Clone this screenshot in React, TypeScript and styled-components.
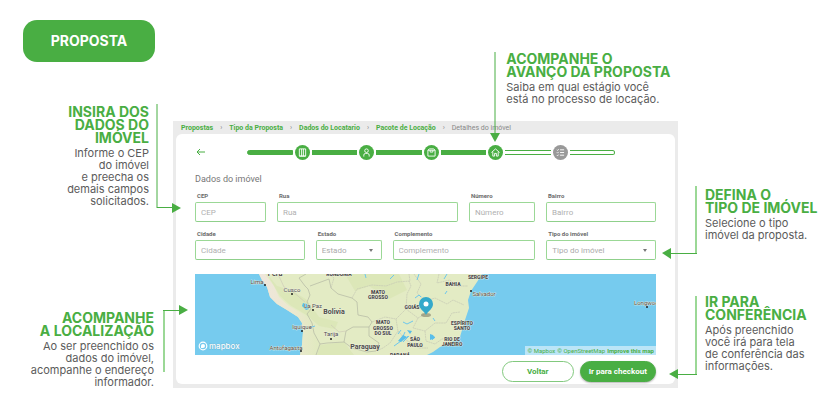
import React from "react";
import styled, { createGlobalStyle, css } from "styled-components";

const green = "#49ae43";
const soft = "#9bd896";

const GlobalStyle = createGlobalStyle`
  * { box-sizing: border-box; }
  body { margin: 0; background: #fff; font-family: Roboto, sans-serif; }
  button, input, select { font-family: inherit; }
`;

const Page = styled.main`
  display: grid;
  grid-template-columns: minmax(0, 173fr) minmax(0, 505fr) minmax(0, 162fr);
  padding-bottom: 32px;
`;
const LeftColumn = styled.div`
  display: flex;
  flex-direction: column;
  gap: 104px;
  padding-top: 20px;
`;
const Intro = styled.div`
  display: flex;
  flex-direction: column;
  gap: 43px;
`;
const CenterColumn = styled.div`
  display: flex;
  flex-direction: column;
  gap: 16px;
  padding-top: 52px;
`;
const RightColumn = styled.div`
  display: flex;
  flex-direction: column;
  gap: 54px;
  padding-top: 188px;
`;
const Badge = styled.h1`
  display: flex;
  align-items: center;
  justify-content: center;
  width: 132px;
  height: 42px;
  margin: 0 0 0 23px;
  border-radius: 14px;
  background: ${green};
  color: #fff;
  font: 700 14px/16px Inter, sans-serif;
`;

type Side = "left" | "top" | "right";
const NoteBox = styled.section<{ $side: Side; $inset: number }>`
  position: relative;
  z-index: 1;
  white-space: pre;
  ${({ $side, $inset }) =>
    $side === "left"
      ? css`text-align: right; padding-right: ${$inset}px;`
      : $side === "right"
      ? css`padding-left: ${$inset}px;`
      : css`margin-left: ${$inset}%;`}
`;
const NoteTitle = styled.h2`
  margin: 0 0 3px;
  color: ${green};
  font: 700 14px/13px Inter, sans-serif;
`;
const NoteText = styled.p`
  margin: 0;
  color: #5b5b5b;
  font: 400 11px/12px Inter, sans-serif;
`;
const Connector = styled.svg<{ $side: Side; $edge: number; $top: number }>`
  position: absolute;
  top: ${({ $top }) => $top}px;
  ${({ $side, $edge }) => ($side === "left" ? `right: ${$edge}px;` : `left: ${$edge}px;`)}
  fill: none;
  pointer-events: none;
`;

const Panel = styled.div`
  display: flex;
  flex-direction: column;
  padding: 0 3px 4px;
  background: #ebebeb;
`;
const Crumbs = styled.nav`
  display: flex;
  align-items: center;
  gap: 7px;
  height: 13px;
  padding-left: 5px;
  color: #888;
  font-size: 7px;
  line-height: 8px;
  white-space: nowrap;
`;
const Crumb = styled.a`
  color: ${green};
  font-weight: 700;
  text-decoration: none;
`;
const Card = styled.div`
  padding: 10px 19px 2px;
  border-radius: 6px;
  background: #fff;
`;
const StepRow = styled.div`
  display: grid;
  grid-template-columns: 52fr 368fr 41fr;
  align-items: center;
  height: 16px;
`;
const BackButton = styled.button`
  justify-self: start;
  display: flex;
  padding: 0;
  border: 0;
  background: none;
  color: ${green};
`;
const Steps = styled.div`
  display: flex;
  align-items: center;
  gap: 2px;
`;
const Segment = styled.span<{ $done: boolean; $end?: "start" | "end" }>`
  flex: 1 1 2px;
  height: 5px;
  background: ${({ $done }) => ($done ? green : "#fff")};
  border: 1px solid ${green};
  ${({ $done }) => !$done && "border-left-width: 0; border-right-width: 0;"}
  ${({ $end }) => $end === "start" && "border-radius: 3px 0 0 3px;"}
  ${({ $end }) => $end === "end" && "border-right-width: 1px; border-radius: 0 3px 3px 0;"}
`;
const StepDot = styled.span<{ $done: boolean }>`
  display: flex;
  align-items: center;
  justify-content: center;
  width: 15px;
  height: 15px;
  border-radius: 50%;
  background: ${({ $done }) => ($done ? green : "#999")};
  color: #fff;
`;
const FormTitle = styled.h3`
  margin: 13px 0 7px;
  color: #777;
  font-weight: 400;
  font-size: 9px;
  line-height: 12px;
`;
const Form = styled.form`
  display: grid;
  gap: 8px;
`;
const FieldRow = styled.div<{ $columns: string }>`
  display: grid;
  grid-template-columns: ${({ $columns }) => $columns};
  gap: 11px;
`;
const Field = styled.div`
  display: grid;
  gap: 2px;
  min-width: 0;
  position: relative;
`;
const Label = styled.label`
  padding-left: 2px;
  color: #6b6b6b;
  font-weight: 700;
  font-size: 6px;
  line-height: 8px;
`;
const controlStyle = css`
  width: 100%;
  height: 20px;
  padding: 0 5px;
  border: 1px solid ${soft};
  border-bottom-color: #8fd08b;
  border-radius: 2px;
  background: #fff;
  color: #aaa;
  font-size: 8px;
  outline: none;
`;
const Input = styled.input`
  ${controlStyle}
  &::placeholder { color: #b0b0b0; opacity: 1; }
`;
const Select = styled.select`
  ${controlStyle}
  appearance: none;
`;
const Caret = styled.span`
  position: absolute;
  right: 9px;
  bottom: 8px;
  border: 2px solid transparent;
  border-top: 3px solid #777;
  border-bottom: 0;
  pointer-events: none;
`;
const MapFrame = styled.div`
  height: 81px;
  margin-top: 14px;
  position: relative;
  overflow: hidden;
  background: #76cbee;
`;
const MapDrawing = styled.svg`
  display: block;
  width: 100%;
  height: 100%;
  font-family: Roboto, sans-serif;
`;
const Attribution = styled.div`
  position: absolute;
  right: 0;
  bottom: 0;
  display: flex;
  gap: 2px;
  padding: 0 2px;
  background: rgba(255, 255, 255, 0.5);
  font-size: 6px;
  line-height: 9px;
  white-space: nowrap;
`;
const MapLink = styled.a<{ $bold?: boolean }>`
  color: ${green};
  font-weight: ${({ $bold }) => ($bold ? 700 : 400)};
  text-decoration: none;
`;
const Actions = styled.div`
  display: flex;
  justify-content: flex-end;
  gap: 6px;
  margin-top: 6px;
`;
const Action = styled.button<{ $primary?: boolean }>`
  min-width: ${({ $primary }) => ($primary ? 76 : 72)}px;
  height: 21px;
  padding: 0 8px;
  border: 1px solid ${({ $primary }) => ($primary ? green : "#82c97e")};
  border-radius: 11px;
  background: ${({ $primary }) => ($primary ? green : "#fff")};
  color: ${({ $primary }) => ($primary ? "#fff" : green)};
  box-shadow: ${({ $primary }) => ($primary ? "0 1px 2px rgba(0,0,0,.3)" : "none")};
  font-weight: 700;
  font-size: 8px;
`;

interface NoteProps {
  side: Side;
  inset: number;
  title: string;
  text: string;
  children: React.ReactNode;
}
const Note = ({ side, inset, title, text, children }: NoteProps) => (
  <NoteBox $side={side} $inset={inset}>
    <NoteTitle>{title}</NoteTitle>
    <NoteText>{text}</NoteText>
    {children}
  </NoteBox>
);

const stepIcons: Record<string, React.ReactNode> = {
  building: <path d="M1.5 1h7v8h-7zM4 1v8M6 1v8M1.500 9h7" />,
  person: <><circle cx="5" cy="3" r="2" /><path d="M2 9.500V8q0-2 2-2h2q2 0 2 2v1.500" /></>,
  box: <path d="M1 2.500h8V9H1zM1 2.500 2.500 1h5L9 2.500M3.500 2.500v2h3v-2" />,
  house: <path d="M.5 5 5 1l4.500 4M2 4.500V9h2V6h2v3h2V4.500" />,
  list: <path d="M4.500 2H9M4.500 5H9M4.500 8H9M1 2l.7.7L3 1.300M1 5l.7.7L3 4.300M1 8l.7.7L3 7.300" />,
};
const steps = ["building", "person", "box", "house", "list"];

const Stepper = () => (
  <Steps aria-label="Andamento da proposta">
    <Segment $done $end="start" />
    {steps.map((name, i) => (
      <React.Fragment key={name}>
        <StepDot $done={i < 4}>
          <svg width="9" height="9" viewBox="0 0 10 10" fill="none" stroke="currentColor" strokeWidth="1">
            {stepIcons[name]}
          </svg>
        </StepDot>
        <Segment $done={i < 3} $end={i === 4 ? "end" : undefined} />
      </React.Fragment>
    ))}
  </Steps>
);

const TextField = ({ id, label }: { id: string; label: string }) => (
  <Field>
    <Label htmlFor={id}>{label}</Label>
    <Input id={id} placeholder={label} />
  </Field>
);
const SelectField = ({ id, label }: { id: string; label: string }) => (
  <Field>
    <Label htmlFor={id}>{label}</Label>
    <Select id={id}><option>{label}</option></Select>
    <Caret />
  </Field>
);

type Place = [string, number, number];
const states: Place[] = [
  ["RONDONIA", 144, 2], ["MATO", 183, 20], ["GROSSO", 183, 25], ["GOIÁS", 217, 35],
  ["MATO", 188, 50], ["GROSSO", 188, 56], ["DO SUL", 188, 61], ["BAHIA", 258, 12],
  ["SERGIPE", 283, 5], ["ESPÍRITO", 267, 51], ["SANTO", 267, 56], ["SÃO", 220, 67],
  ["PAULO", 220, 73], ["RIO DE", 257, 67], ["JANEIRO", 257, 72], ["PARANÁ", 205, 83],
];
const cities: Place[] = [
  ["Lima", 62, 10], ["Cusco", 97, 18], ["La Paz", 118, 34], ["Iquique", 107, 55],
  ["Tarija", 136, 62], ["Antofagasta", 91, 76], ["Salvador", 289, 22], ["Longwood", 453, 31],
];
const dots = [[70, 11], [97, 20], [118, 36], [107, 57], [136, 65], [106, 77], [276, 17], [452, 33]];

const LocationMap = () => (
  <MapFrame>
    <MapDrawing viewBox="0 0 461 81" preserveAspectRatio="xMidYMid slice" role="img" aria-label="Mapa">
      <defs>
        <linearGradient id="andes" x1="0" x2="1">
          <stop offset="0" stopColor="#efe6dc" />
          <stop offset=".55" stopColor="#ece8d0" />
          <stop offset="1" stopColor="#e0eabf" />
        </linearGradient>
      </defs>
      <path fill="#e3ebc4" d="M64 0 67 6 72 13 75 23 82 30 92 36 103 43 107 49 108 58 107 71 105 81H232L238 78 245 73 255 69 265 63 267 56 270 46 274 34 273 26 276 17 282 8 287 0Z" />
      <path fill="url(#andes)" d="M64 0 67 6 72 13 75 23 82 30 92 36 103 43 107 49 108 58 107 71 105 81H122L124 69 119 59 117 49 108 40 94 32 84 23 79 12 70 0Z" />
      <path fill="#d7e5b0" opacity=".6" d="M72 0 82 12 98 17 112 26 124 43 143 48 140 55 124 52 113 42 95 31 85 22ZM150 0l10 17 14-5 20 13 18-9-8-16ZM125 71l24-3 10 13h-37Z" />
      <g fill="none" stroke="#b3b8a4" strokeWidth=".7">
        <path d="M111 0 104 4 110 12 113 15 115 21 112 28 116 35 112 40 117 49 119 59 125 70 132 69 149 68 151 57 158 53 174 53 177 48 173 43 163 41 162 28 157 24 143 20 136 14 134 5 115 12" />
        <path d="M125 70 121 81M149 68 157 74 172 78 181 77 184 69 174 62V53" />
        <path d="M136 14 139 4 134 0M157 24 162 15 177 11 191 12 202 8 215 7 214 0M177 48 190 43 201 45 211 35 212 20 216 12 214 7M201 45 203 57 195 69 188 74 181 77M211 35 223 44 230 40 231 27 240 24 252 30 258 26 269 31M223 44 218 54 230 57 240 49 251 49 257 39 265 38M230 57 231 67 240 70 247 65 257 64M219 0 226 10 222 19 231 27M244 0 242 9 255 6 262 12 273 12M203 57 211 66 224 74 233 74" stroke="#c6c9b4" strokeDasharray="2 .5" />
        <path d="M83 0 89 13 97 17 110 28M136 51 144 58 151 57" stroke="#cfcbb8" />
      </g>
      <g fill="none" stroke="#6dc7ed" strokeWidth="1">
        <path d="M199 1 195 5M170 0 171 4M224 0l-2 6M252 0l-3 5M220 24l4-3 2 2M218 47l-6 3-4-2M214 62l-6 6 5-6M236 64l4-1-3 3M240 47l-2-3M206 56l-3 4M252 17l-2 3M117 53l3-1M199 72l7-5 4-9" />
      </g>
      <path fill="#58bee9" d="m108 29 4 1 2 5-3 1-4-4ZM208 61l4 2-6 5-3-1ZM212 56l5 1-2 3ZM235 60l3 1 2 3-5 2Z" />
      <g fill="#4b4b4b" stroke="#f4f4e5" strokeWidth=".7" paintOrder="stroke" textAnchor="middle">
        <g fontSize="5" fontWeight="900">
          {states.map(([name, x, y], i) => <text key={i} x={x} y={y}>{name}</text>)}
        </g>
        <g fontSize="6">
          {cities.map(([name, x, y]) => <text key={name} x={x} y={y}>{name}</text>)}
        </g>
        <g fontSize="7" fontWeight="700">
          <text x="80" y="2">Peru</text>
          <text x="139" y="40">Bolivia</text>
          <text x="170" y="75">Paraguay</text>
        </g>
      </g>
      <g fill="#222">{dots.map(([x, y]) => <circle key={x} cx={x} cy={y} r="1" />)}</g>
      <ellipse cx="231" cy="41" rx="5" ry="2" fill="#75735d" opacity=".55" />
      <path fill="#34a9ca" d="M231 41c-2-4-7-6-7-11a7 7 0 0 1 14 0c0 5-5 7-7 11Z" />
      <circle cx="231" cy="30" r="2.500" fill="#fff" />
      <g stroke="#589fba" strokeWidth=".4">
        <circle cx="8" cy="72" r="3.800" fill="none" stroke="#fff" strokeWidth="1.200" />
        <path fill="#fff" stroke="none" d="M6 74v-2q0-2 2-2t2 2-2 2Z" />
        <text x="14" y="75" fill="#fff" fontFamily="Inter" fontWeight="500" fontSize="8" paintOrder="stroke">mapbox</text>
      </g>
    </MapDrawing>
    <Attribution>
      <MapLink href="#mapbox">© Mapbox</MapLink>
      <MapLink href="#osm">© OpenStreetMap</MapLink>
      <MapLink href="#improve" $bold>Improve this map</MapLink>
    </Attribution>
  </MapFrame>
);

const crumbs = ["Propostas", "Tipo da Proposta", "Dados do Locatario", "Pacote de Locação"];

export default function App() {
  return (
    <>
      <GlobalStyle />
      <Page>
        <LeftColumn>
          <Intro>
            <Badge>PROPOSTA</Badge>
            <Note side="left" inset={24} title={"INSIRA DOS\nDADOS DO\nIMÓVEL"} text={"Informe o CEP\ndo imóvel\ne preecha os\ndemais campos\nsolicitados."}>
              <Connector $side="left" $edge={-8} $top={-1} width="25" height="109">
                <path d="M1 0V104" stroke={green} />
                <path d="M1 103.500H17" stroke={green} />
                <path d="M16 99 25 104 16 109Z" fill={green} />
              </Connector>
            </Note>
          </Intro>
          <Note side="left" inset={19} title={"ACOMPANHE\nA LOCALIZAÇÃO"} text={"Ao ser preenchido os\ndados do imóvel,\nacompanhe o endereço\ninformador."}>
            <Connector $side="left" $edge={-15} $top={-6} width="25" height="67">
              <path d="M1 67V5" stroke={soft} strokeWidth="2" />
              <path d="M0 5.500H17" stroke={green} />
              <path d="M16 0 25 5 16 10Z" fill={green} />
            </Connector>
          </Note>
        </LeftColumn>
        <CenterColumn>
          <Note side="top" inset={66} title={"ACOMPANHE O\nAVANÇO DA PROPOSTA"} text={"Saiba em qual estágio você\nestá no processo de locação."}>
            <Connector $side="top" $edge={-16} $top={0} width="10" height="90">
              <path d="M5 0V82" stroke={green} />
              <path d="M0 81H10L5 90Z" fill={green} />
            </Connector>
          </Note>
          <Panel>
            <Crumbs aria-label="Navegação">
              {crumbs.map((name) => (
                <React.Fragment key={name}>
                  <Crumb href="#etapa">{name}</Crumb>
                  <span>›</span>
                </React.Fragment>
              ))}
              <span>Detalhes do imóvel</span>
            </Crumbs>
            <Card>
              <StepRow>
                <BackButton aria-label="Voltar">
                  <svg width="11" height="8" viewBox="0 0 11 8" fill="none" stroke="currentColor">
                    <path d="M10 4H2M5 1 2 4l3 3" />
                  </svg>
                </BackButton>
                <Stepper />
              </StepRow>
              <FormTitle>Dados do imóvel</FormTitle>
              <Form>
                <FieldRow $columns="71fr 181fr 66fr 110fr">
                  <TextField id="cep" label="CEP" />
                  <TextField id="rua" label="Rua" />
                  <TextField id="numero" label="Número" />
                  <TextField id="bairro" label="Bairro" />
                </FieldRow>
                <FieldRow $columns="110fr 66fr 143fr 110fr">
                  <TextField id="cidade" label="Cidade" />
                  <SelectField id="estado" label="Estado" />
                  <TextField id="complemento" label="Complemento" />
                  <SelectField id="tipo" label="Tipo do imóvel" />
                </FieldRow>
              </Form>
              <LocationMap />
              <Actions>
                <Action type="button">Voltar</Action>
                <Action type="button" $primary>Ir para checkout</Action>
              </Actions>
            </Card>
          </Panel>
        </CenterColumn>
        <RightColumn>
          <Note side="right" inset={27} title={"DEFINA O\nTIPO DE IMÓVEL"} text={"Selecione o tipo\nimóvel da proposta."}>
            <Connector $side="right" $edge={-16} $top={-2} width="35" height="73">
              <path d="M34 0V68" stroke={soft} strokeWidth="2" />
              <path d="M8 67.500H35" stroke={green} />
              <path d="M9 62 0 67 9 73Z" fill={green} />
            </Connector>
          </Note>
          <Note side="right" inset={27} title={"IR PARA\nCONFERÊNCIA"} text={"Após preenchido\nvocê irá para tela\nde conferência das\ninformações."}>
            <Connector $side="right" $edge={-9} $top={1} width="28" height="83">
              <path d="M27 0V79" stroke={soft} strokeWidth="2" />
              <path d="M8 78.500H28" stroke={green} />
              <path d="M9 73 0 78 9 83Z" fill={green} />
            </Connector>
          </Note>
        </RightColumn>
      </Page>
    </>
  );
}
